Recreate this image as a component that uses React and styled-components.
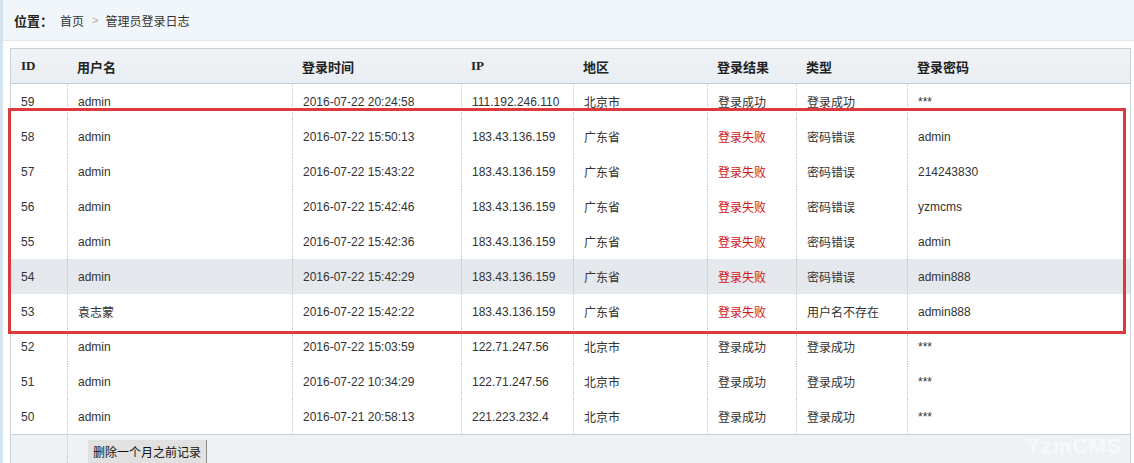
import React from "react";
import styled, { createGlobalStyle } from "styled-components";

const GlobalStyle = createGlobalStyle`
  html, body {
    margin: 0;
    padding: 0;
    background: #fff;
    overflow: hidden;
  }
  body {
    font-family: "Liberation Sans", "Noto Sans CJK SC", sans-serif;
    font-size: 12px;
    color: #333;
  }
`;

const Page = styled.div`
  position: relative;
  height: 463px;
  border-left: 3px solid #d5e3ef;
  box-sizing: border-box;
`;

const TopBar = styled.div`
  display: flex;
  align-items: center;
  height: 40px;
  padding-left: 11px;
  background: #f1f6fa;
  border-bottom: 1px solid #dfe8ef;
`;

const Label = styled.span`
  font-weight: bold;
  font-size: 13px;
  color: #222;
  margin-right: 7px;
`;

const Crumb = styled.span`
  font-size: 12px;
  color: #333;
`;

const Sep = styled.span`
  color: #aaa;
  font-size: 11px;
  margin: 0 7px 0 8px;
`;

const TableWrap = styled.div`
  margin: 7px 3px 0 7px;
`;

const Table = styled.table`
  width: 100%;
  table-layout: fixed;
  border-collapse: separate;
  border-spacing: 0;
  border: 1px solid #c9d1d8;
`;

const Th = styled.th`
  box-sizing: border-box;
  width: ${(p) => p.$w || "auto"};
  height: 35px;
  padding: 0 10px;
  text-align: left;
  font-family: "Liberation Serif", "Noto Sans CJK SC", serif;
  font-size: 13px;
  font-weight: bold;
  color: #222;
  background: linear-gradient(#f0f3f6, #e9eef2);
  border-bottom: 1px solid #c5ced5;
`;

const Tr = styled.tr`
  background: ${(p) => (p.$hover ? "#e5e9ed" : "#fff")};
`;

const Td = styled.td`
  box-sizing: border-box;
  height: 35px;
  padding: 0 10px;
  white-space: nowrap;
  overflow: hidden;
  color: ${(p) => (p.$fail ? "#d0141b" : "#333")};
  border-left: ${(p) => (p.$first ? "none" : "1px dotted #c3c3c3")};
`;

const FootTd = styled.td`
  box-sizing: border-box;
  height: 35px;
  padding: 5px 20px 0;
  vertical-align: top;
  background: #eef2f5;
  border-top: 1px solid #c9d1d8;
  border-left: ${(p) => (p.$first ? "none" : "1px dotted #c3c3c3")};
`;

const Button = styled.button`
  font-family: "Noto Sans CJK SC", sans-serif;
  font-size: 12px;
  color: #111;
  background: #e1e1e1;
  border: none;
  border-right: 1px solid #8c8c8c;
  padding: 1px 5px;
  height: 24px;
  line-height: 20px;
  margin: 0;
`;

const RedBox = styled.div`
  position: absolute;
  left: 5px;
  top: 108px;
  width: 1118px;
  height: 226px;
  box-sizing: border-box;
  border: 3px solid #dc3a3d;
  pointer-events: none;
`;

const Watermark = styled.div`
  position: absolute;
  right: 12px;
  bottom: 5px;
  font-family: "Liberation Sans", sans-serif;
  font-weight: bold;
  font-size: 21px;
  color: rgba(255, 255, 255, 0.55);
  letter-spacing: 1px;
`;

const headers = [
  ["ID", "56px"],
  ["用户名", "225px"],
  ["登录时间", "169px"],
  ["IP", "112px"],
  ["地区", "134px"],
  ["登录结果", "89px"],
  ["类型", "111px"],
  ["登录密码", "auto"],
];

const ok = (id, user, time, ip) => ({
  id, user, time, ip, area: "北京市", result: "登录成功", type: "登录成功", pwd: "***", fail: false,
});
const bad = (id, user, time, type, pwd) => ({
  id, user, time, ip: "183.43.136.159", area: "广东省", result: "登录失败", type, pwd, fail: true,
});

const rows = [
  ok(59, "admin", "2016-07-22 20:24:58", "111.192.246.110"),
  bad(58, "admin", "2016-07-22 15:50:13", "密码错误", "admin"),
  bad(57, "admin", "2016-07-22 15:43:22", "密码错误", "214243830"),
  bad(56, "admin", "2016-07-22 15:42:46", "密码错误", "yzmcms"),
  bad(55, "admin", "2016-07-22 15:42:36", "密码错误", "admin"),
  bad(54, "admin", "2016-07-22 15:42:29", "密码错误", "admin888"),
  bad(53, "袁志蒙", "2016-07-22 15:42:22", "用户名不存在", "admin888"),
  ok(52, "admin", "2016-07-22 15:03:59", "122.71.247.56"),
  ok(51, "admin", "2016-07-22 10:34:29", "122.71.247.56"),
  ok(50, "admin", "2016-07-21 20:58:13", "221.223.232.4"),
];

export default function App() {
  return (
    <Page>
      <GlobalStyle />
      <TopBar>
        <Label>位置：</Label>
        <Crumb>首页</Crumb>
        <Sep>&gt;</Sep>
        <Crumb>管理员登录日志</Crumb>
      </TopBar>
      <TableWrap>
        <Table>
          <thead>
            <tr>
              {headers.map(([h, w]) => (
                <Th key={h} $w={w}>{h}</Th>
              ))}
            </tr>
          </thead>
          <tbody>
            {rows.map((r) => (
              <Tr key={r.id} $hover={r.id === 54}>
                <Td $first>{r.id}</Td>
                <Td>{r.user}</Td>
                <Td>{r.time}</Td>
                <Td>{r.ip}</Td>
                <Td>{r.area}</Td>
                <Td $fail={r.fail}>{r.result}</Td>
                <Td>{r.type}</Td>
                <Td>{r.pwd}</Td>
              </Tr>
            ))}
            <tr>
              <FootTd $first />
              <FootTd colSpan={7}>
                <Button>删除一个月之前记录</Button>
              </FootTd>
            </tr>
          </tbody>
        </Table>
      </TableWrap>
      <RedBox />
      <Watermark>YzmCMS</Watermark>
    </Page>
  );
}
